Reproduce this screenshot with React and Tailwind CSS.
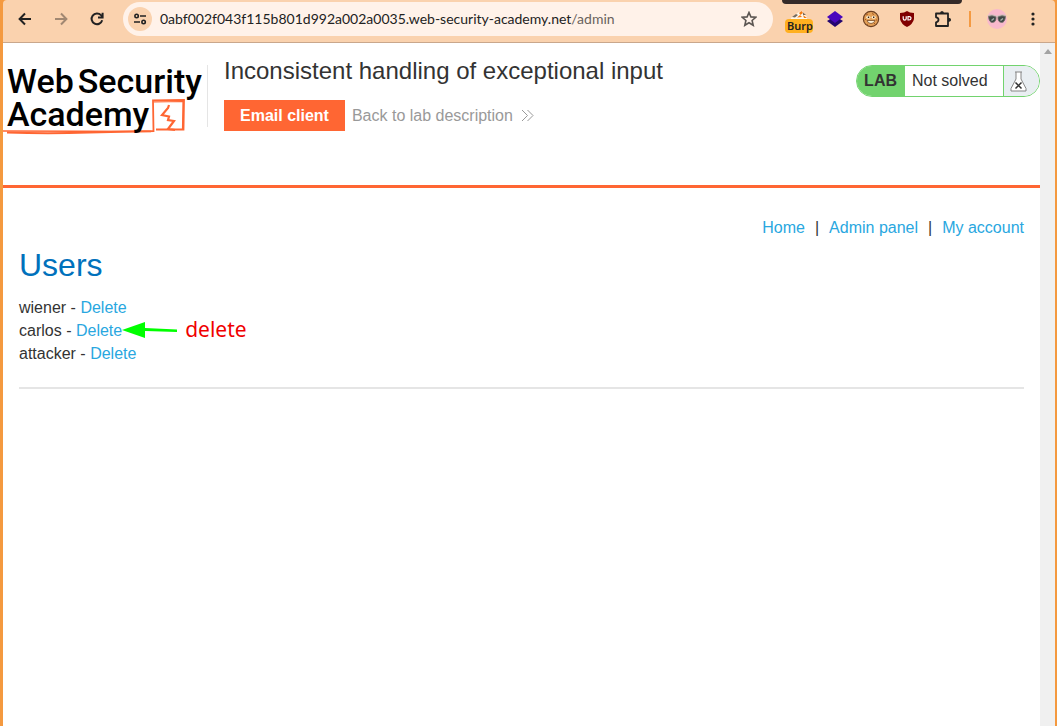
import React from "react";

const users = ["wiener", "carlos", "attacker"];

function ToolButton({ label, className = "", children }) {
  return (
    <button type="button" aria-label={label} className={"flex h-7 w-7 shrink-0 items-center justify-center " + className}>
      {children}
    </button>
  );
}

function BackIcon() {
  return (
    <svg width="14" height="14" viewBox="0 0 14 14" fill="none" stroke="currentColor" strokeWidth="2">
      <path d="M13 7H2M7 1.5L1.6 7L7 12.5" />
    </svg>
  );
}

function ForwardIcon() {
  return (
    <svg width="14" height="14" viewBox="0 0 14 14" fill="none" stroke="currentColor" strokeWidth="2">
      <path d="M1 7h11M7 1.5L12.4 7L7 12.5" />
    </svg>
  );
}

function ReloadIcon() {
  return (
    <svg width="14" height="14" viewBox="0 0 14 14" fill="none" stroke="currentColor" strokeWidth="2">
      <path d="M12.2 8.3A5.4 5.4 0 1 1 11 3.2L12.4 4.8" />
      <path d="M12.6 0.8V5.4H8" />
    </svg>
  );
}

function TuneIcon() {
  return (
    <svg width="14" height="12" viewBox="0 0 14 12" fill="none" stroke="#222" strokeWidth="1.6">
      <circle cx="3.6" cy="3" r="1.7" />
      <path d="M7 3h6M1 9h6" />
      <circle cx="10.6" cy="9" r="1.7" />
    </svg>
  );
}

function StarIcon() {
  return (
    <svg width="16" height="16" viewBox="0 0 16 16" fill="none" stroke="#5c5652" strokeWidth="1.6">
      <path d="M8 1.5L9.9 5.9L14.8 6.3L11.1 9.5L12.2 14.3L8 11.8L3.8 14.3L4.9 9.5L1.2 6.3L6.1 5.9Z" />
    </svg>
  );
}

function BurpFoxIcon() {
  return (
    <svg className="shrink-0" width="16" height="8" viewBox="0 0 16 8">
      <path d="M0 7L4 4L8 1L11 0L12 2L16 6V8H0Z" fill="#fff6e8" />
      <path d="M8 2L10.500 0L12 2L9.500 4ZM6 6.500L9 4L11 6ZM12 4L16 7H13Z" fill="#f27b12" />
      <path d="M1 6L5 3L7 4L4 6.500ZM12 1.500L15 4L12 4Z" fill="#756b60" />
    </svg>
  );
}

function LayersIcon() {
  return (
    <svg width="16" height="16" viewBox="0 0 16 16">
      <path d="M0 10L8 5L16 10L8 16Z" fill="#23056f" />
      <path d="M0 6L8 0L16 6L8 12Z" fill="#4907bd" />
    </svg>
  );
}

function CookieIcon() {
  return (
    <svg width="18" height="18" viewBox="0 0 18 18">
      <circle cx="9" cy="9" r="7.6" fill="#e4a057" stroke="#6d3f20" strokeWidth="1.200" />
      <path d="M4 5L6 4M10 3.500L12 4.500M3 9.500h1M14 10h1M5 14l1 .6M12 14l1-1" stroke="#a75d24" strokeWidth="1" />
      <ellipse cx="6.300" cy="7.200" rx="2" ry="1.500" fill="#fff2d5" />
      <ellipse cx="11.700" cy="7.200" rx="2" ry="1.500" fill="#fff2d5" />
      <path d="M5.800 7.200h1.400M11 7.200h1.400" stroke="#3a2012" strokeWidth="1.400" />
      <path d="M5 10.500h8q-1 3-4 3t-4-3Z" fill="#fff4dd" stroke="#7a4a24" strokeWidth="0.800" />
    </svg>
  );
}

function ShieldIcon() {
  return (
    <svg width="16" height="16" viewBox="0 0 16 16">
      <path d="M8 0Q10.500 2 15 2V8Q14 13 8 16Q2 13 1 8V2Q5.500 2 8 0Z" fill="#800000" />
      <path d="M4.200 5.200V7.500Q4.200 9.200 5.700 9.200T7.200 7.500V5.200M9 5.700V9H10Q12 9 12 7.300T10 5.700Z" fill="none" stroke="#fff" strokeWidth="1.200" />
    </svg>
  );
}

function PuzzleIcon() {
  return (
    <svg width="18" height="18" viewBox="0 0 18 18">
      <path
        d="M2 3.500H14V8V11.500V16H2V12.300Q4.500 12 4.500 9.800T2 7.300Z"
        fill="none"
        stroke="#222"
        strokeWidth="1.800"
        strokeLinejoin="round"
      />
      <path d="M6 3.500Q6 1 8 1T10 3.500ZM14 7.800Q17 7.800 17 9.800T14 11.800Z" fill="#222" />
    </svg>
  );
}

function ProfileIcon() {
  return (
    <svg width="20" height="20" viewBox="0 0 20 20">
      <circle cx="10" cy="10" r="10" fill="#f8b9cc" />
      <path d="M1 7Q5 5.500 9 7.500H11Q15 5.500 19 7" fill="none" stroke="#c9bdb8" strokeWidth="1.500" />
      <path d="M1.500 7.500Q5 6 9 8Q9.500 13 5.500 13.500Q2 13.500 1.500 7.500Z" fill="#3e4745" stroke="#77716d" strokeWidth="0.800" />
      <path d="M18.500 7.500Q15 6 11 8Q10.500 13 14.500 13.500Q18 13.500 18.500 7.500Z" fill="#3e4745" stroke="#77716d" strokeWidth="0.800" />
      <path d="M4.500 11.500l2.500-2M13.500 11.500l2.500-2" stroke="#a5afa9" strokeWidth="1.500" />
    </svg>
  );
}

function Toolbar() {
  return (
    <div className="relative flex h-[43px] shrink-0 items-start rounded-t-sm border-b border-[#c9a78c] bg-[#fad2ae] pt-[5px] pr-2 text-[#222]">
      <div className="absolute top-0 right-[93px] h-1 w-[180px] rounded-b bg-[#352a28]" />
      <div className="flex shrink-0 gap-2 pl-2">
        <ToolButton label="Back"><BackIcon /></ToolButton>
        <ToolButton label="Forward" className="text-[#a18872]"><ForwardIcon /></ToolButton>
        <ToolButton label="Reload"><ReloadIcon /></ToolButton>
      </div>
      <div className="-mt-[3px] ml-3 flex h-[34px] min-w-0 flex-1 items-center rounded-full bg-[#fff2e9] pr-2.5 pl-[5px]">
        <button type="button" aria-label="View site information" className="flex h-6 w-6 shrink-0 items-center justify-center rounded-full bg-[#fad2ae]">
          <TuneIcon />
        </button>
        <div className="min-w-0 flex-1 truncate pl-2 font-[Lato,sans-serif] text-[14px] leading-5">
          0abf002f043f115b801d992a002a0035.web-security-academy.net<span className="text-[#69625d]">/admin</span>
        </div>
        <ToolButton label="Bookmark this page"><StarIcon /></ToolButton>
      </div>
      <div className="ml-3 flex shrink-0 items-start gap-2">
        <button type="button" aria-label="Burp" className="flex h-7 w-7 flex-col items-center pt-1.5">
          <BurpFoxIcon />
          <span className="flex h-[14px] w-7 shrink-0 items-center overflow-hidden rounded bg-[#ffb01f] pl-0.5 font-['Noto_Sans',sans-serif] text-[11px] leading-[14px] font-semibold">Burp</span>
        </button>
        <ToolButton label="Layers"><LayersIcon /></ToolButton>
        <ToolButton label="Cookie editor"><CookieIcon /></ToolButton>
        <ToolButton label="uBlock Origin"><ShieldIcon /></ToolButton>
        <ToolButton label="Extensions"><PuzzleIcon /></ToolButton>
      </div>
      <div className="mt-1.5 ml-3 h-4 w-0.5 shrink-0 bg-[#f49a42]" />
      <ToolButton label="Profile" className="ml-3"><ProfileIcon /></ToolButton>
      <ToolButton label="Menu" className="ml-2">
        <svg width="4" height="14" viewBox="0 0 4 14" fill="#222">
          <circle cx="2" cy="2" r="1.600" />
          <circle cx="2" cy="7" r="1.600" />
          <circle cx="2" cy="12" r="1.600" />
        </svg>
      </ToolButton>
    </div>
  );
}

function Logo() {
  return (
    <a href="#academy" className="relative block h-[74px] w-[205px] shrink-0 pl-1 font-[Roboto,sans-serif] text-[34px] leading-[33px] font-medium text-black">
      <svg className="absolute top-0 left-0" width="205" height="74" viewBox="0 0 205 74" fill="none" stroke="#ff6633">
        <path d="M0 66L148 66.500" strokeWidth="1.500" />
        <path d="M4 67.500Q45 69 86 67.500L150.500 66L150 35.500L181 35L180.500 64.500L153 64.500" strokeWidth="1.800" />
        <path d="M151 37L180 36.500L179.500 64" strokeWidth="1.200" />
        <path d="M166 40L165 43L159 50L166 51.500L165 55L171 56L165 64L172 65" strokeWidth="2.200" />
      </svg>
      <span className="relative flex gap-1"><span>Web</span><span>Security</span></span>
      <span className="relative block">Academy</span>
    </a>
  );
}

function LabStatus() {
  return (
    <div className="flex h-8 shrink-0 items-stretch overflow-hidden rounded-full border border-[#72d36e] text-[16px] leading-[30px]">
      <span className="bg-[#72d36e] px-2 pl-[7px] font-bold">LAB</span>
      <span className="w-[98px] bg-white pl-[7px]">Not solved</span>
      <span className="flex w-9 items-center border-l border-[#72d36e] bg-[#e9eef2] pl-1.5">
        <svg width="17" height="21" viewBox="0 0 17 21" fill="white" stroke="#858585">
          <path d="M5 1H12M6 1V8L1 17.500V20H16V17.500L11 8V1" />
          <path d="M5.500 11.500L11.500 17.500M11.500 11.500L5.500 17.500" stroke="#333" strokeWidth="1.500" />
        </svg>
      </span>
    </div>
  );
}

function Header() {
  return (
    <header className="flex min-h-[145px] items-start border-b-3 border-[#ff6633] pt-[22px]">
      <Logo />
      <div className="h-[62px] w-px shrink-0 -translate-x-px bg-[#e5e5e5]" />
      <div className="min-w-0 flex-1 pl-[15px]">
        <h1 className="-mt-2 text-[24px] leading-7">Inconsistent handling of exceptional input</h1>
        <div className="mt-[15px] flex items-center gap-[7px]">
          <button type="button" className="h-[31px] bg-[#ff6633] px-4 text-[16px] font-bold text-white">Email client</button>
          <a href="#description" className="flex items-center gap-2 text-[16px] leading-5 text-[#999]">
            Back to lab description
            <svg width="13" height="13" viewBox="0 0 13 13" fill="none" stroke="#999">
              <path d="M1 1L6.500 6.500L1 12M6.500 1L12 6.500L6.500 12" />
            </svg>
          </a>
        </div>
      </div>
      <LabStatus />
    </header>
  );
}

function Scrollbar() {
  return (
    <div className="w-[15px] shrink-0 bg-[#f0f0f0] pt-1.5">
      <svg className="mx-auto" width="8" height="5" viewBox="0 0 8 5"><path d="M0 5L4 0L8 5Z" fill="#a3a3a3" /></svg>
    </div>
  );
}

export default function App() {
  return (
    <div className="flex min-h-screen flex-col border-r-2 border-l-3 border-[#f4993f] bg-[#f4993f] font-['Liberation_Sans',Arial,sans-serif] text-[#333]">
      <Toolbar />
      <div className="flex flex-1 bg-white">
        <div className="min-w-0 flex-1">
          <Header />
          <main className="px-4 pt-[29px]">
            <nav className="flex justify-end gap-2.5 text-[16px] leading-[22px] text-[#29a7df]">
              <a href="#home">Home</a>
              <span className="text-[#333]">|</span>
              <a href="#admin">Admin panel</a>
              <span className="text-[#333]">|</span>
              <a href="#account">My account</a>
            </nav>
            <h2 className="mt-2 text-[32px] leading-[36px] text-[#0071bc]">Users</h2>
            <ul className="mt-[13px] text-[16px] leading-[23px]">
              {users.map((name) => (
                <li key={name}>
                  {name} -{" "}
                  <span className="relative inline-block">
                    <a href={"#delete-" + name} className="text-[#29a7df]">Delete</a>
                    {name === "carlos" && (
                      <span className="absolute top-0 left-full flex items-end gap-[7px] font-['Noto_Sans',sans-serif] text-[21px] leading-5 text-[#f00000]">
                        <svg width="56" height="18" viewBox="0 0 56 18" fill="#00ff00">
                          <path d="M0 9L23 1V7L55 8.500V11L23 10V17Z" />
                        </svg>
                        delete
                      </span>
                    )}
                  </span>
                </li>
              ))}
            </ul>
            <hr className="mt-[22px] border-t-2 border-[#e5e5e5]" />
          </main>
        </div>
        <Scrollbar />
      </div>
    </div>
  );
}
